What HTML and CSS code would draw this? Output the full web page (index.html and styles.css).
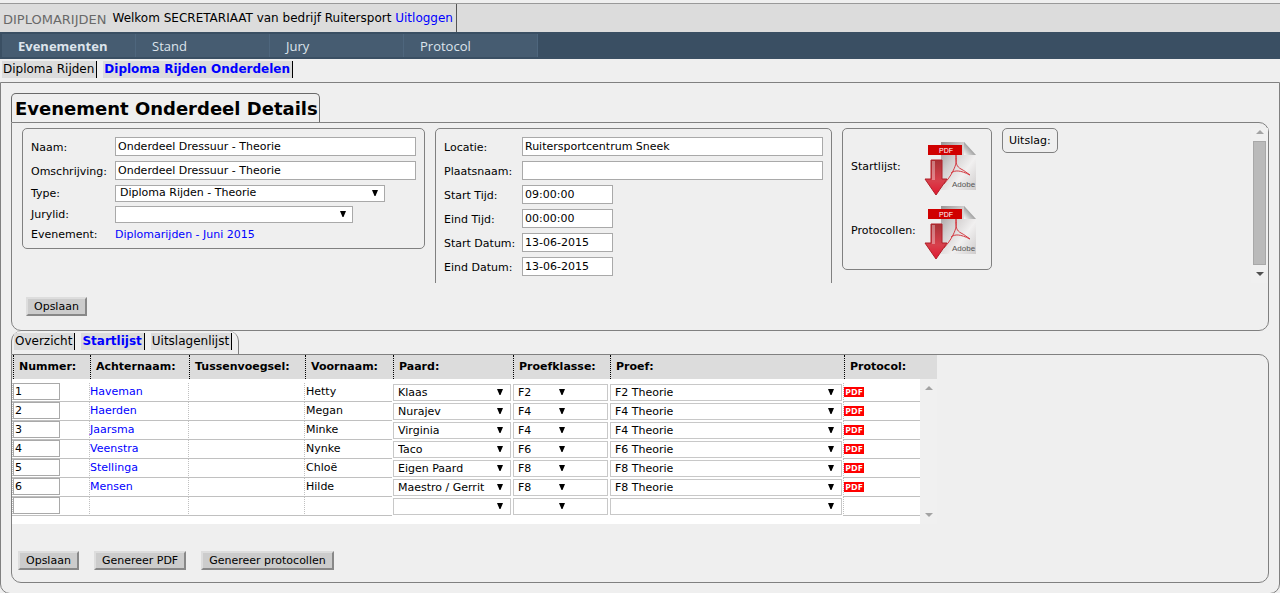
FILE: index.html
```html
<!DOCTYPE html>
<html lang="nl">
<head>
<meta charset="utf-8">
<title>Diplomarijden</title>
<link rel="stylesheet" href="styles.css">
</head>
<body>
<svg class="defs" aria-hidden="true">
  <defs>
    <linearGradient id="page" x1="0" y1="0" x2="1" y2="1"><stop offset="0" stop-color="#989494"/><stop offset=".35" stop-color="#d2cfcf"/><stop offset=".65" stop-color="#f1f0f0"/><stop offset="1" stop-color="#cfcccc"/></linearGradient>
    <linearGradient id="fold" x1="0" y1="1" x2="1" y2="0"><stop offset="0" stop-color="#f8f8f8"/><stop offset=".6" stop-color="#909090"/></linearGradient>
    <linearGradient id="arrow" x1="0" y1="0" x2="0" y2="1"><stop offset="0" stop-color="#a83236"/><stop offset=".6" stop-color="#d8404c"/><stop offset="1" stop-color="#e01830"/></linearGradient>
    <symbol id="pdf-download" viewBox="0 0 64 64">
      <path d="M21 7h23l12 13v35H21z" fill="url(#page)"/>
      <path d="M44 7v13h12z" fill="url(#fold)"/>
      <path d="M36 20c1 6 0 10-3 16s-5 8-9 13M36 20c-1 8 1 12 5 14s6 4 9 6M31 38c4-3 9-3 19 2" fill="none" stroke="#d43a42" stroke-width="1"/>
      <path d="M8 10h34v10H8z" fill="#d00000"/>
      <text x="19" y="18" class="icon-pdf">PDF</text>
      <path d="M11 25h11v19h5L16 60 5 44h6z" fill="url(#arrow)" stroke="#b02028"/>
      <path d="M12 26h3v19h-3z" fill="#fff" opacity=".35"/>
      <text x="32" y="52" class="icon-adobe">Adobe</text>
    </symbol>
    <symbol id="up" viewBox="0 0 8 4"><path d="M0 4l4-4 4 4z" fill="currentColor"/></symbol>
    <symbol id="down" viewBox="0 0 8 4"><path d="M0 0l4 4 4-4z" fill="currentColor"/></symbol>
  </defs>
</svg>
<header class="header">
  <span class="brand">DIPLOMARIJDEN</span>
  <span class="welcome">Welkom SECRETARIAAT van bedrijf Ruitersport <a href="#">Uitloggen</a></span>
</header>
<nav class="menu">
  <a class="active" href="#">Evenementen</a><a href="#">Stand</a><a href="#">Jury</a><a href="#">Protocol</a>
</nav>
<nav class="tabs page-tabs">
  <a href="#">Diploma Rijden</a><a class="active" href="#">Diploma Rijden Onderdelen</a>
</nav>
<main class="page">
  <h1 class="title">Evenement Onderdeel Details</h1>
  <section class="details">
    <div class="scroller">
      <div class="groups">
        <div class="group form">
          <div class="row"><label for="naam">Naam:</label><input id="naam" class="wide" value="Onderdeel Dressuur - Theorie"></div>
          <div class="row"><label for="oms">Omschrijving:</label><input id="oms" class="wide" value="Onderdeel Dressuur - Theorie"></div>
          <div class="row short"><label for="type">Type:</label><select id="type" class="type"><option>Diploma Rijden - Theorie</option></select></div>
          <div class="row short"><label for="jury">Jurylid:</label><select id="jury" class="jury"><option></option></select></div>
          <div class="row last"><span class="label">Evenement:</span><a href="#">Diplomarijden - Juni 2015</a></div>
        </div>
        <div class="group form place">
          <div class="row"><label for="loc">Locatie:</label><input id="loc" class="wide" value="Ruitersportcentrum Sneek"></div>
          <div class="row"><label for="plaats">Plaatsnaam:</label><input id="plaats" class="wide"></div>
          <div class="row"><label for="st">Start Tijd:</label><input id="st" value="09:00:00"></div>
          <div class="row"><label for="et">Eind Tijd:</label><input id="et" value="00:00:00"></div>
          <div class="row"><label for="sd">Start Datum:</label><input id="sd" value="13-06-2015"></div>
          <div class="row"><label for="ed">Eind Datum:</label><input id="ed" value="13-06-2015"></div>
        </div>
        <div class="group downloads">
          <span>Startlijst:</span><a href="#" aria-label="Startlijst PDF"><svg><use href="#pdf-download"/></svg></a>
          <span>Protocollen:</span><a href="#" aria-label="Protocollen PDF"><svg><use href="#pdf-download"/></svg></a>
        </div>
        <div class="group result">Uitslag:</div>
      </div>
      <div class="scrollbar">
        <svg><use href="#up"/></svg><div class="thumb"></div><svg class="on"><use href="#down"/></svg>
      </div>
    </div>
    <div class="actions"><button type="button">Opslaan</button></div>
  </section>
  <nav class="tabs list-tabs">
    <a href="#">Overzicht</a><a class="active" href="#">Startlijst</a><a href="#">Uitslagenlijst</a>
  </nav>
  <section class="list">
    <div class="sheet">
      <table class="head">
        <colgroup><col class="c1"><col class="c2"><col class="c3"><col class="c4"><col class="c5"><col class="c6"><col class="c7"><col></colgroup>
        <thead><tr><th>Nummer:</th><th>Achternaam:</th><th>Tussenvoegsel:</th><th>Voornaam:</th><th>Paard:</th><th>Proefklasse:</th><th>Proef:</th><th>Protocol:</th></tr></thead>
      </table>
      <div class="body">
        <table class="rows">
          <colgroup><col class="c1"><col class="c2"><col class="c3"><col class="c4"><col class="c5"><col class="c6"><col class="c7"><col></colgroup>
          <tbody>
            <tr><td><input aria-label="Nummer" value="1"></td><td><a href="#">Haveman</a></td><td></td><td class="first-name">Hetty</td><td class="pick"><select aria-label="Paard"><option>Klaas</option></select></td><td class="pick klasse"><select aria-label="Proefklasse"><option>F2</option></select></td><td class="pick"><select aria-label="Proef"><option>F2 Theorie</option></select></td><td><a class="pdf" href="#">PDF</a></td></tr>
            <tr><td><input aria-label="Nummer" value="2"></td><td><a href="#">Haerden</a></td><td></td><td class="first-name">Megan</td><td class="pick"><select aria-label="Paard"><option>Nurajev</option></select></td><td class="pick klasse"><select aria-label="Proefklasse"><option>F4</option></select></td><td class="pick"><select aria-label="Proef"><option>F4 Theorie</option></select></td><td><a class="pdf" href="#">PDF</a></td></tr>
            <tr><td><input aria-label="Nummer" value="3"></td><td><a href="#">Jaarsma</a></td><td></td><td class="first-name">Minke</td><td class="pick"><select aria-label="Paard"><option>Virginia</option></select></td><td class="pick klasse"><select aria-label="Proefklasse"><option>F4</option></select></td><td class="pick"><select aria-label="Proef"><option>F4 Theorie</option></select></td><td><a class="pdf" href="#">PDF</a></td></tr>
            <tr><td><input aria-label="Nummer" value="4"></td><td><a href="#">Veenstra</a></td><td></td><td class="first-name">Nynke</td><td class="pick"><select aria-label="Paard"><option>Taco</option></select></td><td class="pick klasse"><select aria-label="Proefklasse"><option>F6</option></select></td><td class="pick"><select aria-label="Proef"><option>F6 Theorie</option></select></td><td><a class="pdf" href="#">PDF</a></td></tr>
            <tr><td><input aria-label="Nummer" value="5"></td><td><a href="#">Stellinga</a></td><td></td><td class="first-name">Chloë</td><td class="pick"><select aria-label="Paard"><option>Eigen Paard</option></select></td><td class="pick klasse"><select aria-label="Proefklasse"><option>F8</option></select></td><td class="pick"><select aria-label="Proef"><option>F8 Theorie</option></select></td><td><a class="pdf" href="#">PDF</a></td></tr>
            <tr><td><input aria-label="Nummer" value="6"></td><td><a href="#">Mensen</a></td><td></td><td class="first-name">Hilde</td><td class="pick"><select aria-label="Paard"><option>Maestro / Gerrit</option></select></td><td class="pick klasse"><select aria-label="Proefklasse"><option>F8</option></select></td><td class="pick"><select aria-label="Proef"><option>F8 Theorie</option></select></td><td><a class="pdf" href="#">PDF</a></td></tr>
            <tr><td><input aria-label="Nummer"></td><td></td><td></td><td></td><td class="pick"><select aria-label="Paard"><option></option></select></td><td class="pick klasse"><select aria-label="Proefklasse"><option></option></select></td><td class="pick"><select aria-label="Proef"><option></option></select></td><td></td></tr>
          </tbody>
        </table>
        <div class="scrollbar"><svg><use href="#up"/></svg><svg><use href="#down"/></svg></div>
      </div>
    </div>
    <div class="actions"><button type="button">Opslaan</button><button type="button">Genereer PDF</button><button type="button">Genereer protocollen</button></div>
  </section>
</main>
</body>
</html>
```
FILE: styles.css
```css
* { box-sizing: border-box; }
body {
  margin: 0;
  background: #efefef;
  color: #000;
  font: 11px/14px Verdana, "DejaVu Sans", sans-serif;
}
a { color: #00f; text-decoration: none; }
.defs { position: absolute; width: 0; height: 0; }

.header {
  display: flex;
  height: 29px;
  margin-top: 3px;
  border-top: 1px solid #999;
  background: #dcdcdc;
}
.brand { padding: 8px 6px 0 3px; color: #696969; font-size: 13px; line-height: 16px; }
.welcome { padding: 7px 3px 0 0; border-right: 1px solid #555; font-size: 12px; }

.menu {
  display: flex;
  height: 27px;
  padding: 2px;
  background: #3a4f63;
}
.menu a {
  width: 134px;
  padding: 0 16px;
  border-right: 1px solid #4e667d;
  background: #465c71;
  color: #dde4ec;
  font: 13px/24px "Open Sans", "Noto Sans", sans-serif;
}
.menu .active { font-weight: bold; }

.tabs { display: flex; gap: 6px; }
.tabs a {
  padding: 0 2px 0 1px;
  border-right: 1px solid #000;
  background: #dcdcdc;
  color: #000;
  font-size: 12px;
  line-height: 17px;
}
.tabs .active { color: #00f; font-weight: bold; }
.page-tabs { padding: 2px 2px 4px; }

.page {
  padding: 10px;
  border: 1px solid #808080;
  border-radius: 0 0 10px 10px;
}
.title {
  width: max-content;
  margin: 0;
  padding: 1px 1px 0 3px;
  border: 1px solid #696969;
  border-bottom: 0;
  border-radius: 5px 5px 0 0;
  font-size: 18px;
  line-height: 27px;
}
.details, .list {
  border: 1px solid #808080;
  border-radius: 0 10px 10px 10px;
}
.details { padding: 5px 0 14px 10px; }
.scroller { display: flex; height: 155px; overflow: hidden; }
.groups { display: flex; flex: 1; align-items: flex-start; gap: 10px; }
.group { flex: none; border: 1px solid #808080; border-radius: 5px; }
.form { padding: 6px 8px 5px; }
.row { display: flex; align-items: center; height: 24px; padding-bottom: 1px; }
.row label, .row .label { width: 84px; padding-top: 2px; }
.row a { padding-top: 2px; }
.short { height: 21px; }
.last { height: 18px; }
.place { padding-bottom: 10px; }
.place .row label { width: 78px; }
input, select {
  height: 19px;
  margin: 0;
  padding: 0 2px;
  border: 1px solid #a9a9a9;
  border-radius: 0;
  background: #fff;
  color: #000;
  font: inherit;
}
.row input { width: 91px; }
.row .wide { width: 301px; }
select {
  height: 17px;
  padding: 0 20px 0 4px;
  appearance: none;
  background: #fff url("data:image/svg+xml,%3Csvg xmlns='http://www.w3.org/2000/svg' width='6' height='6'%3E%3Cpath d='M0 0h6L3.500 6h-1z'/%3E%3C/svg%3E") no-repeat right 6px top 4px;
}
.type { width: 270px; }
.jury { width: 238px; }

.downloads {
  display: grid;
  grid-template-columns: 69px 64px;
  align-items: center;
  padding: 6px 7px 6px 8px;
}
.downloads svg { display: block; width: 64px; height: 64px; }
.icon-pdf { fill: #fff; font: 7px "Liberation Sans", sans-serif; }
.icon-adobe { fill: #555; font: 8px "Liberation Sans", sans-serif; }
.result { padding: 5px 6px 4px; }

.scrollbar {
  display: flex;
  flex-direction: column;
  justify-content: space-between;
  align-items: center;
  width: 17px;
  padding: 7px 0;
  background: #f0f0f0;
  color: #a3a3a3;
}
.scroller .scrollbar { padding-top: 2px; }
.scrollbar svg { width: 8px; height: 4px; flex: none; }
.scrollbar .on { color: #505050; }
.thumb { width: 13px; height: 124px; border: 1px solid #a8a8a8; background: #bababa; }

.actions { display: flex; gap: 15px; }
.details .actions { padding: 14px 4px 0; }
button {
  height: 19px;
  padding: 0 6px;
  border: 2px solid;
  border-color: #ddd #888 #888 #ddd;
  background: #ccc;
  color: #000;
  font: inherit;
}

.list-tabs {
  width: max-content;
  height: 23px;
  padding: 2px 6px 0 2px;
  border: 1px solid #808080;
  border-width: 0 1px 0 1px;
  border-radius: 10px 10px 0 0;
}
.list-tabs a { height: 17px; }

.list { padding-bottom: 12px; }
.sheet { width: 925px; }
table { border-collapse: separate; border-spacing: 0; table-layout: fixed; }
.c1 { width: 77px; }
.c2 { width: 99px; }
.c3 { width: 116px; }
.c4 { width: 88px; }
.c5 { width: 120px; }
.c6 { width: 97px; }
.c7 { width: 234px; }
.head { width: 100%; padding-left: 1px; background: #dcdcdc; }
th { height: 24px; padding: 0 0 0 5px; border-left: 1px dotted #000; text-align: left; }
.body { display: flex; background: #fff; }
.rows { width: 908px; margin: 4px 0 8px; }
td {
  height: 19px;
  padding: 0;
  border-left: 1px dotted #c0c0c0;
  border-bottom: 1px solid #c0c0c0;
  line-height: 18px;
  vertical-align: top;
}
td input { display: block; width: 47px; height: 17px; padding: 0 1px; }
td.first-name { padding-left: 1px; }
td.pick { padding: 1px 1px 0 1px; border: 0; }
td select { display: block; width: 100%; border-color: #c8c8c8; background-position: right 7px top 4px; line-height: 14px; }
.klasse select { background-position: 45px 4px; }
.pdf {
  display: block;
  width: 20px;
  margin-top: 4px;
  background: #f00;
  color: #fff;
  font: bold 9px/10px "Open Sans", sans-serif;
  text-align: center;
}
.list .actions { padding: 27px 6px 0; }
```
